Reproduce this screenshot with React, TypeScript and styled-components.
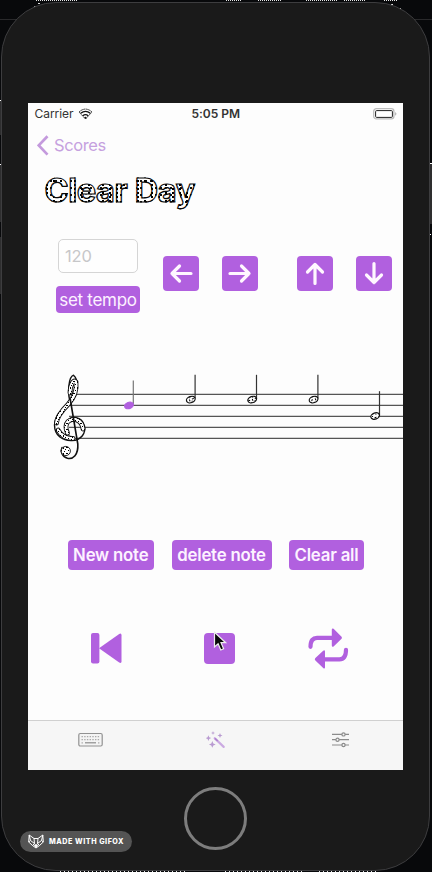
import React from "react";
import styled, { createGlobalStyle } from "styled-components";

const violet = "#b160df";

const GlobalStyle = createGlobalStyle`
  * { box-sizing: border-box; }
  body { margin: 0; background: #08090b; font-family: Inter, "Liberation Sans", sans-serif; overflow: hidden; }
  button, input { font-family: inherit; margin: 0; }
  svg { display: block; flex: none; }
`;

const Stage = styled.main`
  position: relative;
  width: 432px;
  height: 872px;
  padding: 2px 0 0 1px;
  overflow: hidden;
  background: #08090b;
`;

const Edges = styled.svg`
  position: absolute;
  inset: 0;
`;

const Device = styled.div`
  position: relative;
  width: 429px;
  height: 869px;
  padding: 100px 0 0 26px;
  border: 1px solid #3d3d3f;
  border-radius: 55px;
  background: #1a1a1a;
`;

const Screen = styled.div`
  display: flex;
  flex-direction: column;
  width: 375px;
  height: 667px;
  background: #fdfdfd;
  overflow: hidden;
`;

const StatusBar = styled.header`
  display: grid;
  grid-template-columns: 1fr auto 1fr;
  align-items: center;
  height: 21px;
  padding: 0 6px 0 6.5px;
  font-size: 12px;
  color: #333;
`;

const Carrier = styled.div`
  display: flex;
  align-items: center;
  gap: 5px;
  letter-spacing: -0.05px;
`;

const Clock = styled.div`
  font-weight: 600;
  letter-spacing: -0.05px;
`;

const Battery = styled.div`
  display: flex;
  justify-content: flex-end;
`;

const BackLink = styled.nav`
  display: flex;
  align-items: center;
  gap: 5px;
  height: 42px;
  padding-left: 9px;
  font-size: 16.5px;
  letter-spacing: -0.4px;
  color: #c6a1df;
`;

const Title = styled.h1`
  align-self: flex-start;
  margin: 0 0 0 16.5px;
  height: 61px;
  padding-top: 5px;
  font-size: 32.5px;
  line-height: 40px;
  font-weight: 700;
  letter-spacing: -0.35px;
  color: transparent;
  -webkit-text-stroke: 1.2px #080808;
  background-color: #fff;
  background-image:
    radial-gradient(circle at 1px 1px, #000 0.7px, transparent 0.8px),
    radial-gradient(circle at 2px 3px, #000 0.8px, transparent 0.9px);
  background-size: 5px 7px, 7px 4px;
  background-clip: text;
  -webkit-background-clip: text;
`;

const Controls = styled.section`
  display: flex;
  align-items: flex-start;
  height: 106px;
  padding: 12px 0 0 28px;
`;

const Tempo = styled.div`
  display: flex;
  flex-direction: column;
  align-items: center;
  gap: 13px;
  width: 84px;
`;

const TempoField = styled.input`
  width: 80px;
  height: 34px;
  padding: 0 6px;
  border: 1px solid #d5d5d5;
  border-radius: 5px;
  background: #fefefe;
  font-size: 16.5px;
  letter-spacing: -0.1px;
  outline: none;
  &::placeholder { color: #c7c7c9; }
`;

const Button = styled.button<{ $w: number; $h: number; $bold?: boolean; $track?: number }>`
  display: flex;
  flex: none;
  align-items: center;
  justify-content: center;
  width: ${(p) => p.$w}px;
  height: ${(p) => p.$h}px;
  padding: 0;
  border: 0;
  border-radius: 4px;
  background: ${violet};
  color: #fdf2ff;
  font-size: ${(p) => (p.$bold ? 16.8 : 17)}px;
  font-weight: ${(p) => (p.$bold ? 600 : 400)};
  letter-spacing: ${(p) => p.$track ?? -0.2}px;
  white-space: nowrap;
`;

const Arrows = styled.div<{ $left: number }>`
  display: flex;
  gap: 23px;
  margin: 17.4px 0 0 ${(p) => p.$left}px;
`;

const Score = styled.section`
  height: 156px;
`;

const NoteActions = styled.section`
  display: flex;
  gap: 17.5px;
  height: 81px;
  padding: 51px 0 0 39.5px;
`;

const Transport = styled.section`
  display: grid;
  grid-template-columns: 113px 104px auto;
  align-items: center;
  height: 40px;
  margin-top: 58px;
  padding-left: 63px;
`;

const StopWrap = styled.div`
  position: relative;
`;

const StopShape = styled.div`
  width: 31px;
  height: 31px;
  border-radius: 4px;
  background: ${violet};
`;

const Cursor = styled.svg`
  position: absolute;
  left: 9px;
  top: -2px;
`;

const TabBar = styled.nav`
  display: grid;
  grid-template-columns: repeat(3, 1fr);
  justify-items: center;
  height: 50px;
  margin-top: auto;
  padding-top: 9px;
  border-top: 1px solid #d0d0d0;
  background: #f6f6f6;
`;

const Home = styled.div`
  width: 63px;
  height: 63px;
  margin: 17px 0 0 156px;
  border: 3px solid #7d7d7d;
  border-radius: 50%;
`;

const Badge = styled.div`
  position: absolute;
  left: 20px;
  top: 831px;
  display: flex;
  align-items: center;
  gap: 5px;
  width: 112px;
  height: 21px;
  padding-left: 8px;
  border-radius: 11px;
  background: #545454;
  color: #fff;
  font-size: 7.2px;
  font-weight: 800;
  letter-spacing: 0.52px;
  white-space: nowrap;
`;

type Direction = "left" | "right" | "up" | "down";
const turns: Record<Direction, number> = { left: 0, up: 90, right: 180, down: 270 };

function Arrow({ to }: { to: Direction }) {
  return (
    <svg width="36" height="35" viewBox="0 0 36 35">
      <path
        transform={`rotate(${turns[to]} 18 17.5)`}
        d="M28 17.5H9M16.5 10 9 17.5l7.5 7.5"
        fill="none"
        stroke="#fff7ff"
        strokeWidth="3.2"
        strokeLinecap="round"
        strokeLinejoin="round"
      />
    </svg>
  );
}

const staffLines = [61.4, 72.4, 83.4, 94.4, 105.4];
const notes = [
  { x: 101, y: 72.4, active: true },
  { x: 162.8, y: 66.6 },
  { x: 224.2, y: 66.6 },
  { x: 285.6, y: 66.6 },
  { x: 347.2, y: 83 },
];

function Staff() {
  return (
    <svg width="375" height="156" viewBox="0 0 375 156">
      <defs>
        <pattern id="grain" width="7" height="6" patternUnits="userSpaceOnUse">
          <rect width="7" height="6" fill="#fff" />
          <path d="M0 0h1v2H0zM3 0h2v1H3zM2 2h1v1H2zM5 3h1v1H5zM1 4h1v1H1z" fill="#000" />
        </pattern>
      </defs>
      {staffLines.map((y) => (
        <path key={y} d={`M41 ${y}H375`} stroke="#555" strokeWidth="1.3" />
      ))}
      <g fill="none" strokeLinecap="round" strokeLinejoin="round">
        <path
          d="M43 72C38.5 59 41 43.5 45.5 42.2C50.5 46 50.3 58 42 68C35 77 27 81 26.5 92C26.5 103 35 108 44 107.6C53.5 107 58 100 56.5 93C54 83 42.5 82 38.5 89C36.5 95 38 100 41 102"
          stroke="#111"
          strokeWidth="1.4"
        />
        <path
          d="M28.5 90C29 83 34.5 77 40 71.5C46 65 49 57 48 49C45.5 45.5 42 52 42 60M30 97C34 104 40 105.6 45 105.4M55 96C54 87 45.5 84 40 88.5C37.5 91 37.3 96 39.5 100"
          stroke="#111"
          strokeWidth="4.8"
        />
        <path
          d="M28.5 90C29 83 34.5 77 40 71.5C46 65 49 57 48 49C45.5 45.5 42 52 42 60M30 97C34 104 40 105.6 45 105.4M55 96C54 87 45.5 84 40 88.5C37.5 91 37.3 96 39.5 100"
          stroke="url(#grain)"
          strokeWidth="3"
        />
        <path d="M42.2 66L49.8 111C50.5 122 45 126.3 39.5 125.3C34 124 32.2 118 34 114.5" stroke="#111" strokeWidth="1.6" />
      </g>
      <circle cx="37.8" cy="118" r="4.6" fill="url(#grain)" stroke="#111" strokeWidth="0.9" />
      {notes.map((n) => (
        <g key={n.x}>
          <path d={`M${n.x + 4.3} ${n.y - 1}V${n.y - 24.8}`} stroke={n.active ? "#777" : "#333"} strokeWidth="1.2" />
          <ellipse
            cx={n.x}
            cy={n.y}
            rx="4.5"
            ry="3.1"
            transform={`rotate(-20 ${n.x} ${n.y})`}
            fill={n.active ? violet : "url(#grain)"}
            stroke={n.active ? violet : "#111"}
            strokeWidth="1.2"
          />
        </g>
      ))}
    </svg>
  );
}

export default function App() {
  return (
    <Stage>
      <GlobalStyle />
      <Edges width="432" height="872" viewBox="0 0 432 872">
        <path d="M0 19.5H18M412 19.5H432" stroke="#29292b" />
        <path d="M36 .5H78M226 .5H241M258 .5H282M306 .5H338M344 .5H366M384 .5H397" stroke="#e5e5e5" strokeDasharray="1 1" />
        <path d="M34 6.5h2M38 3.5h2M391 4.5h2M400 8.5h1" stroke="#ddd" />
        <path d="M60 871.5H185M225 871.5H304M319 871.5H376" stroke="#e5e5e5" strokeDasharray="1 3" />
        <path d="M0 101h3v34H0zM0 165h3v57H0zM0 237h3v57H0zM428 164h4v60h-4z" fill="#2e2e2f" />
        <path d="M0 100.5h1M0 164.5h1M430 163.5h2M430 234.5h1" stroke="#fff" />
      </Edges>
      <Device>
        <Screen>
          <StatusBar>
            <Carrier>
              Carrier
              <svg width="15" height="12" viewBox="0 0 15 12" fill="none">
                <path d="M1 4Q7.5-1.8 14 4L7.5 11Z" fill="#fff" stroke="#222" strokeWidth=".9" strokeDasharray="2 .5" />
                <path d="M2.7 5.3Q7.5 1.4 12.3 5.3M4.8 7.7Q7.5 5.4 10.2 7.7" stroke="#111" strokeWidth="1.3" />
                <circle cx="7.5" cy="9.8" r="1" fill="#111" />
              </svg>
            </Carrier>
            <Clock>5:05 PM</Clock>
            <Battery>
              <svg width="24" height="12" viewBox="0 0 24 12">
                <rect x=".7" y=".7" width="20.2" height="10.2" rx="2.6" fill="#fff" stroke="#bcbcbc" strokeWidth="1.3" />
                <rect x="2.6" y="2.6" width="16.8" height="6.8" rx="1" fill="#fff" stroke="#222" />
                <path d="M22 4q3 1.8 0 3.8z" fill="#bbb" />
              </svg>
            </Battery>
          </StatusBar>
          <BackLink>
            <svg width="12" height="21" viewBox="0 0 12 21">
              <path d="M10.5 1.2 1.8 10.4l8.7 9.2" fill="none" stroke="#c49add" strokeWidth="2.7" />
            </svg>
            Scores
          </BackLink>
          <Title>Clear Day</Title>
          <Controls>
            <Tempo>
              <TempoField placeholder="120" aria-label="Tempo" />
              <Button $w={84} $h={27} $track={-0.3}>set tempo</Button>
            </Tempo>
            <Arrows $left={23}>
              <Button $w={36} $h={35} aria-label="Previous note"><Arrow to="left" /></Button>
              <Button $w={36} $h={35} aria-label="Next note"><Arrow to="right" /></Button>
            </Arrows>
            <Arrows $left={39}>
              <Button $w={36} $h={35} aria-label="Pitch up"><Arrow to="up" /></Button>
              <Button $w={36} $h={35} aria-label="Pitch down"><Arrow to="down" /></Button>
            </Arrows>
          </Controls>
          <Score>
            <Staff />
          </Score>
          <NoteActions>
            <Button $w={86.5} $h={30} $bold>New note</Button>
            <Button $w={100} $h={30} $bold>delete note</Button>
            <Button $w={75} $h={30} $bold>Clear all</Button>
          </NoteActions>
          <Transport>
            <svg width="31" height="31" viewBox="0 0 31 31" fill={violet}>
              <rect width="8.4" height="30.5" rx="2" />
              <path d="M8 15.2 28.2.9Q30.5-.2 30.5 2.2V28.3Q30.5 30.8 28.2 29.5Z" />
            </svg>
            <StopWrap>
              <StopShape />
              <Cursor width="15" height="22" viewBox="0 0 15 22">
                <path d="M1.5 1.2V16l3.6-3.2 2.7 6.2 2.8-1.2L8 11.7h4.7Z" fill="#080808" stroke="#eee" strokeWidth="1.2" />
              </Cursor>
            </StopWrap>
            <svg width="41" height="41" viewBox="0 0 41 41" fill={violet}>
              <path d="M2.5 18.8C2.5 12 5 9.8 9 9.8H25M38 21.8C38 28.6 35.5 31.3 31.5 31.3H16" fill="none" stroke={violet} strokeWidth="4.2" strokeLinecap="round" />
              <path d="M23.8 1.6Q24-.2 25.6.7L33.3 8.4Q34.5 9.6 33.3 10.9L25.6 18.4Q24 19.6 23.8 17.6ZM17 23.5Q16.8 21.5 15.2 22.7L7.4 30Q6.2 31.3 7.4 32.5L15.2 39.9Q16.8 41.3 17 39.4Z" />
            </svg>
          </Transport>
          <TabBar>
            <svg width="25" height="20" viewBox="0 0 25 20">
              <rect x=".8" y="3.5" width="23.4" height="12.5" rx="1.5" fill="#f4f4f4" stroke="#929292" strokeWidth="1.2" />
              <path d="M3.5 6.7h18M3.5 9.7h18M3.5 12.8h2M20 12.8h2" stroke="#aaa" strokeWidth="1.3" strokeDasharray="1.4 1.3" />
              <path d="M7 12.8h11" stroke="#8d8d8d" strokeWidth="1.2" />
            </svg>
            <svg width="20" height="20" viewBox="0 0 20 20" fill="#b99bd1">
              <path d="m8.7 8.2 9 8.7" stroke="#cbaae2" strokeWidth="2.2" strokeLinecap="round" />
              <path d="m8.9 8.3 2.8 2.7" stroke="#b082d0" strokeWidth="1.7" />
              <path d="m2.4 5.3.8 2 2 .8-2 .8-.8 2-.8-2-2-.8 2-.8ZM7 1l.5 1.5L9 3l-1.5.5L7 5l-.5-1.5L5 3l1.5-.5ZM14 3l.7 1.8 1.8.7-1.8.7L14 8l-.7-1.8-1.8-.7 1.8-.7ZM6.3 11l1 2.4 2.4 1-2.4 1-1 2.4-1-2.4-2.4-1 2.4-1Z" />
            </svg>
            <svg width="18" height="20" viewBox="0 0 18 20" fill="#f6f6f6" stroke="#8b8b8b" strokeWidth="1.2">
              <path d="M0 4.4h17M0 9.7h17M0 15h17" />
              <circle cx="11.5" cy="4.4" r="1.6" />
              <circle cx="5.5" cy="9.7" r="1.6" />
              <circle cx="11.5" cy="15" r="1.6" />
            </svg>
          </TabBar>
        </Screen>
        <Home />
      </Device>
      <Badge>
        <svg width="16" height="15" viewBox="0 0 16 15" fill="none" stroke="#fff" strokeWidth="1" strokeLinejoin="round">
          <path d="M1.2 1 6 4.5h4L14.8 1l.5 7-3.8 3.5L8 14l-3.5-2.5L.7 8ZM1.2 1l1.3 5.5L.7 8M14.8 1l-1.3 5.5L15.3 8M2.5 6.5l4 3 1.5 2 1.5-2 4-3M6 4.5l.5 5M10 4.5l-.5 5M4.5 11.5l2-2M11.5 11.5l-2-2" />
          <path d="m6.5 11.5 1.5 2 1.5-2Z" fill="#fff" />
        </svg>
        MADE WITH GIFOX
      </Badge>
    </Stage>
  );
}
